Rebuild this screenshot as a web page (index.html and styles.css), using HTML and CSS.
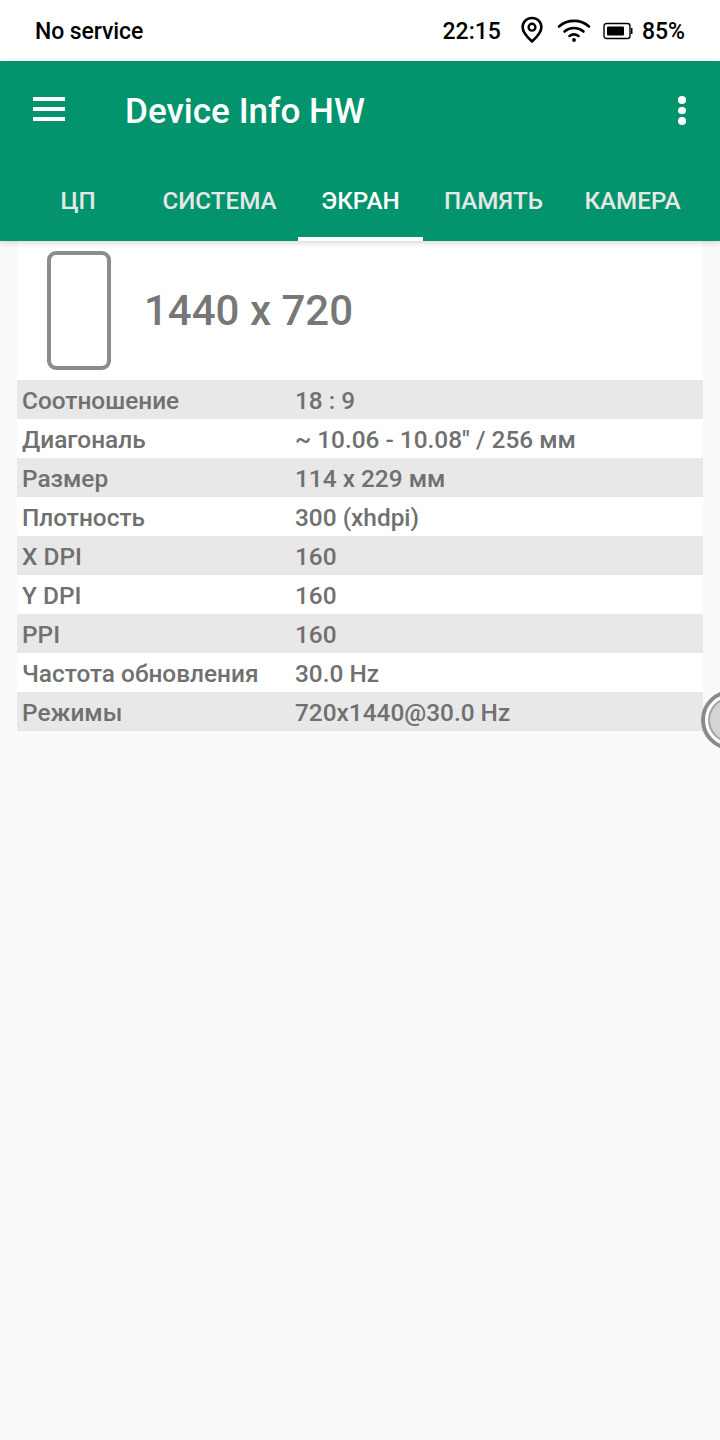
FILE: index.html
```html
<!DOCTYPE html>
<html lang="ru">
<head>
<meta charset="utf-8">
<title>Device Info HW</title>
<link rel="stylesheet" href="styles.css">
</head>
<body>
<div class="status">
  <span class="carrier">No service</span>
  <div class="status-right">
    <span class="time">22:15</span>
    <svg class="ic ic-pin" viewBox="0 0 24 28"><path d="M12 2C6.600 2 2.600 6.100 2.600 11.300c0 5.700 5.400 10.600 9.400 14.200 4-3.600 9.400-8.500 9.400-14.200C21.400 6.100 17.400 2 12 2z" fill="none" stroke="#000" stroke-width="2.600" stroke-linejoin="round"/><circle cx="12" cy="11.200" r="3.400" fill="none" stroke="#000" stroke-width="2.400"/></svg>
    <svg class="ic ic-wifi" viewBox="0 0 34 24"><g fill="none" stroke="#000" stroke-width="2.600" stroke-linecap="round"><path d="M2 8.500C10.500 1 23.500 1 32 8.500"/><path d="M7.500 13.500c5.500-4.600 13.500-4.600 19 0"/><path d="M12.500 18c2.800-2 6.200-2 9 0"/></g><circle cx="17" cy="22" r="1.900" fill="#000"/></svg>
    <svg class="ic ic-batt" viewBox="0 0 30 18"><rect x="1" y="1.500" width="26" height="15" rx="2.500" fill="none" stroke="#000" stroke-width="1.400"/><rect x="4" y="4.500" width="17" height="9" rx="1" fill="#000"/><rect x="28" y="6" width="1.500" height="6" fill="#000"/></svg>
    <span class="pct">85%</span>
  </div>
</div>
<header class="appbar">
  <div class="toolbar">
    <div class="menu"><i></i><i></i><i></i></div>
    <h1 class="title">Device Info HW</h1>
    <div class="more"><i></i><i></i><i></i></div>
  </div>
  <nav class="tabs">
    <span class="tab">ЦП</span>
    <span class="tab">СИСТЕМА</span>
    <span class="tab active">ЭКРАН</span>
    <span class="tab">ПАМЯТЬ</span>
    <span class="tab">КАМЕРА</span>
  </nav>
</header>
<main class="card">
  <div class="hero">
    <div class="phone"></div>
    <div class="res">1440 x 720</div>
  </div>
  <div class="row"><span class="k">Соотношение</span><span class="v">18 : 9</span></div>
  <div class="row"><span class="k">Диагональ</span><span class="v">~ 10.06 - 10.08" / 256 мм</span></div>
  <div class="row"><span class="k">Размер</span><span class="v">114 x 229 мм</span></div>
  <div class="row"><span class="k">Плотность</span><span class="v">300 (xhdpi)</span></div>
  <div class="row"><span class="k">X DPI</span><span class="v">160</span></div>
  <div class="row"><span class="k">Y DPI</span><span class="v">160</span></div>
  <div class="row"><span class="k">PPI</span><span class="v">160</span></div>
  <div class="row"><span class="k">Частота обновления</span><span class="v">30.0 Hz</span></div>
  <div class="row"><span class="k">Режимы</span><span class="v">720x1440@30.0 Hz</span></div>
</main>
<div class="float"><div class="ring"><div class="ring-in"></div></div></div>
</body>
</html>
```
FILE: styles.css
```css
* { box-sizing: border-box; }
html, body { margin: 0; padding: 0; }
body {
  width: 720px;
  height: 1440px;
  overflow: hidden;
  background: #fafafa;
  font-family: Roboto, "Noto Sans", sans-serif;
  position: relative;
}
.status {
  height: 61px;
  background: #fff;
  display: flex;
  align-items: center;
  justify-content: space-between;
  padding: 1px 35px 0 35px;
  color: #000;
  font-size: 23px;
  font-weight: 500;
}
.carrier { letter-spacing: -0.1px; }
.status-right { display: flex; align-items: center; }
.ic { margin-bottom: 2px; }
.time { margin-right: 19px; }
.ic-pin { width: 24px; height: 28px; margin-right: 13px; }
.ic-wifi { width: 34px; height: 24px; margin-right: 12px; }
.ic-batt { width: 30px; height: 18px; margin-right: 9px; margin-bottom: 1px; }
.appbar {
  height: 180px;
  background: #03946d;
  box-shadow: 0 2px 6px rgba(0,0,0,.16);
  position: relative;
  z-index: 2;
}
.toolbar { height: 100px; display: flex; align-items: center; }
.menu { width: 32px; margin-left: 33px; display: flex; flex-direction: column; gap: 6.500px; margin-top: -4px; }
.menu i { display: block; height: 3.500px; background: #fff; }
.title {
  margin: 0 0 0 60px;
  font-size: 35.100px;
  font-weight: 500;
  color: #fff;
  flex: 1;
}
.more { width: 8px; margin-right: 34px; display: flex; flex-direction: column; gap: 3px; margin-top: -1px; }
.more i { display: block; width: 8px; height: 7.500px; border-radius: 50%; background: #fff; }
.tabs {
  height: 80px;
  display: grid;
  grid-template-columns: 126px 157px 125px 141px 137px;
  padding-left: 15px;
}
.tab {
  height: 80px;
  padding-top: 1px;
  line-height: 79px;
  font-size: 24.200px;
  font-weight: 500;
  color: #e6e8e6;
  text-align: center;
  white-space: nowrap;
}
.tab.active { color: #fff; border-bottom: 4px solid #fff; }
.card { margin: 0 17px; background: #fff; }
.hero { height: 139px; display: flex; align-items: center; padding-left: 30px; }
.phone {
  width: 64px;
  height: 119px;
  border: 4px solid #8c8c8c;
  border-radius: 9px;
}
.res { margin-left: 33px; font-size: 42px; font-weight: 500; color: #777; }
.row {
  height: 39px;
  display: flex;
  align-items: center;
  font-size: 24.400px;
  font-weight: 500;
  color: #707070;
  padding: 2px 0 0 5px;
}
.row:nth-child(even) { background: #e8e8e8; }
.k { width: 273px; }
.float {
  position: absolute;
  left: 701px;
  top: 690px;
  width: 19px;
  height: 60px;
  overflow: hidden;
}
.ring {
  width: 60px;
  height: 60px;
  border-radius: 50%;
  border: 4px solid #8a8a8a;
  background: #fff;
  padding: 3px;
}
.ring-in { width: 100%; height: 100%; border-radius: 50%; background: #d4d4d4; border: 2px solid #a4a4a4; }
```
